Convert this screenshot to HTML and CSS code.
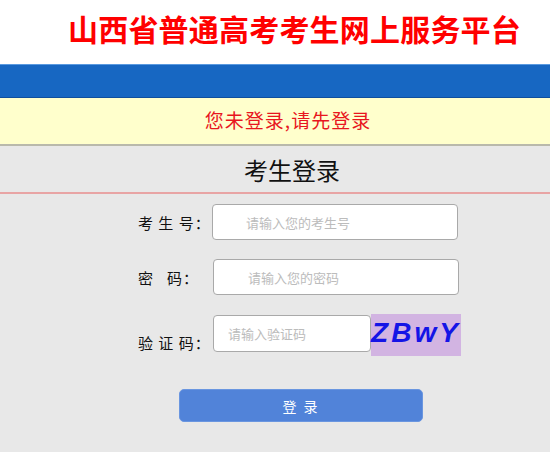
FILE: index.html
```html
<!DOCTYPE html>
<html lang="zh-CN">
<head>
  <meta charset="UTF-8">
  <meta name="viewport" content="width=device-width, initial-scale=1">
  <title>考生登录</title>
  <link rel="stylesheet" href="styles.css">
</head>
<body>

  <!-- Header -->
  <header class="top">
    <h1>山西省普通高考考生网上服务平台</h1>
  </header>
  <div class="nav-bar"></div>

  <!-- Notice -->
  <div class="notice">您未登录,请先登录</div>

  <!-- Login -->
  <main class="login">
    <h2 class="login-title">考生登录</h2>

    <form class="login-form">
      <div class="row">
        <label class="label">考 生 号：</label>
        <input class="field" type="text" placeholder="请输入您的考生号">
      </div>
      <div class="row">
        <label class="label">密&nbsp;&nbsp;&nbsp;码：</label>
        <input class="field field-pass" type="password" placeholder="请输入您的密码">
      </div>
      <div class="row row-code">
        <label class="label">验 证 码：</label>
        <input class="field field-code" type="text" placeholder="请输入验证码">
        <span class="captcha">ZBwY</span>
      </div>
      <button class="btn" type="button">登 录</button>
    </form>
  </main>

</body>
</html>
```

FILE: styles.css
```css
/* RESET */
* {
  margin: 0;
  padding: 0;
  box-sizing: border-box;
}

body {
  font-family: 'Noto Sans CJK SC', 'Noto Sans', sans-serif;
  background: #e8e8e8;
  color: #222;
  min-height: 100vh;
}

/* HEADER */
.top {
  background: #fff;
  height: 64px;
  padding-left: 68px;
}

.top h1 {
  font-size: 30px;
  line-height: 56px;
  font-weight: 700;
  color: #f00;
  letter-spacing: 0.2px;
}

.nav-bar {
  height: 34px;
  background: #1767c2;
  border-top: 1px solid #5a9ae0;
  border-bottom: 1px solid #0f4f9e;
}

/* NOTICE */
.notice {
  height: 48px;
  background: #ffffcc;
  border-bottom: 2px solid #b9b9ab;
  color: #e8161e;
  font-size: 19px;
  line-height: 44px;
  text-align: center;
  padding-left: 26px;
  letter-spacing: 1px;
}

/* LOGIN */
.login-title {
  height: 48px;
  font-size: 24px;
  font-weight: 400;
  line-height: 48px;
  text-align: center;
  padding-left: 34px;
  color: #111;
  border-bottom: 2px solid #e8a4a4;
}

.login-form {
  padding: 10px 0 0 138px;
}

.row {
  display: flex;
  align-items: center;
  margin-bottom: 19px;
}

.label {
  width: 74px;
  font-size: 15px;
  color: #111;
  letter-spacing: 1px;
}

.field {
  width: 246px;
  height: 36px;
  border: 1px solid #a9a9a9;
  border-radius: 4px;
  background: #fff;
  padding-left: 33px;
  font-size: 13px;
  font-family: inherit;
}

.field::placeholder {
  color: #bcbcbc;
}

.field-pass {
  margin-left: 1px;
  padding-left: 34px;
}

.row-code {
  align-items: flex-end;
  margin-bottom: 33px;
}

.row-code .label {
  padding-bottom: 3px;
}

.field-code {
  width: 158px;
  height: 37px;
  margin: 0 0 4px 1px;
  padding-left: 14px;
}

.captcha {
  width: 90px;
  height: 42px;
  background: #d2b4e2;
  color: #1414e6;
  font-family: 'Liberation Sans', Arial, sans-serif;
  font-size: 28px;
  font-weight: 700;
  font-style: italic;
  letter-spacing: 3px;
  line-height: 38px;
  text-align: center;
}

.btn {
  display: block;
  margin-left: 41px;
  width: 244px;
  height: 33px;
  background: #5183d9;
  border: 1px solid #6a96e0;
  border-radius: 5px;
  color: #fff;
  font-size: 14px;
  font-family: inherit;
  letter-spacing: 2px;
}
```
